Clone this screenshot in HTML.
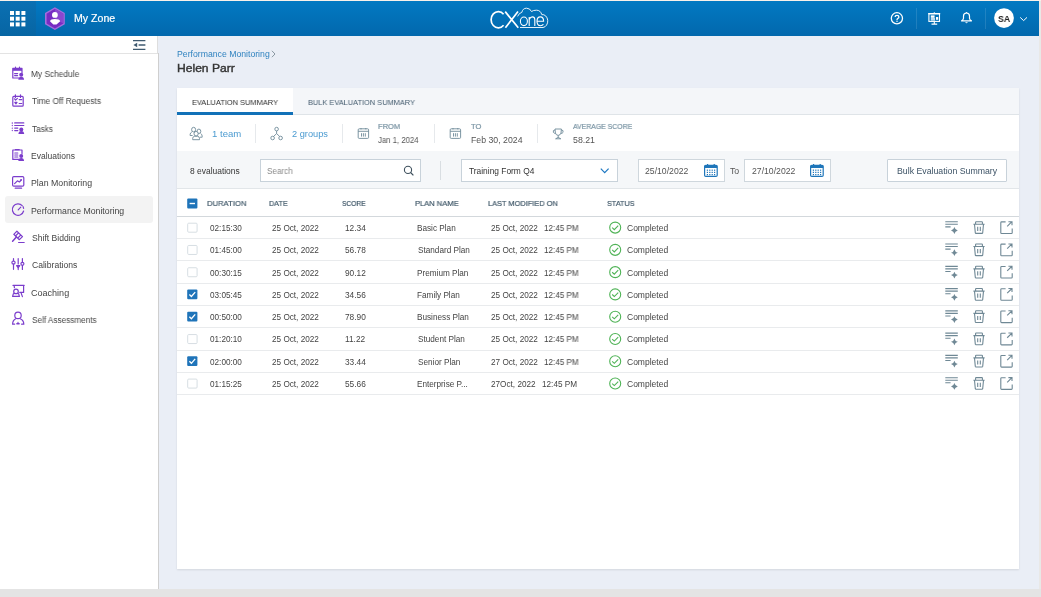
<!DOCTYPE html>
<html><head><meta charset="utf-8"><title>Performance Monitoring</title>
<style>
html,body{margin:0;padding:0;width:1041px;height:597px;overflow:hidden;background:#e4e4e4;}
body{position:relative;font-family:"Liberation Sans", sans-serif;}
.b{position:absolute;box-sizing:content-box;}
.t{position:absolute;white-space:nowrap;transform-origin:0 0;will-change:transform;}
svg.ic{position:absolute;left:0;top:0;}
</style></head><body>
<div class="b" style="left:0px;top:0px;width:1041px;height:1px;background:#f8f1ea"></div>
<div class="b" style="left:1039px;top:1px;width:2px;height:588px;background:#e9e8e6"></div>
<div class="b" style="left:0px;top:589px;width:1041px;height:8px;background:#e4e4e4"></div>
<div class="b" style="left:0px;top:1px;width:1039px;height:35px;background:linear-gradient(#0279c2,#0268ad)"></div>
<div class="b" style="left:0px;top:1px;width:36px;height:35px;background:linear-gradient(#0a70b3,#0765a3)"></div>
<div class="b" style="left:158px;top:36px;width:881px;height:553px;background:#eaeef6"></div>
<div class="b" style="left:0px;top:53px;width:158px;height:536px;background:#fff;border-right:1px solid #cfcfcf"></div>
<div class="b" style="left:0px;top:36px;width:157px;height:17px;background:#fff;border-right:1px solid #dedede;border-bottom:1px solid #e3e3e3"></div>
<div class="b" style="left:5px;top:196px;width:148px;height:27px;background:#f3f3f3;border-radius:3px"></div>
<div class="b" style="left:177px;top:88px;width:842px;height:481px;background:#fff;box-shadow:0 1px 2px rgba(0,0,0,0.10)"></div>
<div class="b" style="left:293px;top:88px;width:726px;height:26px;background:#f4f6f9"></div>
<div class="b" style="left:177px;top:114px;width:842px;height:1px;background:#dfe4e8"></div>
<div class="b" style="left:177px;top:112px;width:116px;height:3px;background:#1271b8"></div>
<div class="b" style="left:177px;top:151px;width:842px;height:37px;background:#f5f7f9"></div>
<div class="b" style="left:177px;top:188px;width:842px;height:1px;background:#e2e6e9"></div>
<div class="b" style="left:177px;top:216px;width:842px;height:1px;background:#d3d8dc"></div>
<div class="b" style="left:177px;top:238px;width:842px;height:1px;background:#e9ebed"></div>
<div class="b" style="left:177px;top:260px;width:842px;height:1px;background:#e9ebed"></div>
<div class="b" style="left:177px;top:283px;width:842px;height:1px;background:#e9ebed"></div>
<div class="b" style="left:177px;top:305px;width:842px;height:1px;background:#e9ebed"></div>
<div class="b" style="left:177px;top:327px;width:842px;height:1px;background:#e9ebed"></div>
<div class="b" style="left:177px;top:350px;width:842px;height:1px;background:#e9ebed"></div>
<div class="b" style="left:177px;top:372px;width:842px;height:1px;background:#e9ebed"></div>
<div class="b" style="left:177px;top:394px;width:842px;height:1px;background:#e9ebed"></div>
<div class="b" style="left:255px;top:124px;width:1px;height:19px;background:#e6e9ec"></div>
<div class="b" style="left:342px;top:124px;width:1px;height:19px;background:#e6e9ec"></div>
<div class="b" style="left:434px;top:124px;width:1px;height:19px;background:#e6e9ec"></div>
<div class="b" style="left:537px;top:124px;width:1px;height:19px;background:#e6e9ec"></div>
<div class="b" style="left:260px;top:159px;width:159px;height:21px;background:#fff;border:1px solid #c8d2da"></div>
<div class="b" style="left:440px;top:161px;width:1px;height:19px;background:#d9dee2"></div>
<div class="b" style="left:461px;top:159px;width:155px;height:21px;background:#fff;border:1px solid #c8d2da"></div>
<div class="b" style="left:638px;top:159px;width:85px;height:21px;background:#fff;border:1px solid #cfd7dd"></div>
<div class="b" style="left:744px;top:159px;width:85px;height:21px;background:#fff;border:1px solid #cfd7dd"></div>
<div class="b" style="left:887px;top:159px;width:118px;height:21px;background:#fff;border:1px solid #c8d2da;border-radius:1px"></div>
<div class="b" style="left:916px;top:8px;width:1px;height:21px;background:rgba(255,255,255,0.12)"></div>
<div class="b" style="left:985px;top:8px;width:1px;height:21px;background:rgba(255,255,255,0.12)"></div>
<svg class="ic" width="1041" height="597" viewBox="0 0 1041 597">
<path d="M271.9,50.8 L275,54 L271.9,57.2" fill="none" stroke="#7f8e99" stroke-width="0.9"/>
<rect x="10" y="11" width="4" height="4" fill="#fff"/>
<rect x="10" y="16.7" width="4" height="4" fill="#fff"/>
<rect x="10" y="22.4" width="4" height="4" fill="#fff"/>
<rect x="15.7" y="11" width="4" height="4" fill="#fff"/>
<rect x="15.7" y="16.7" width="4" height="4" fill="#fff"/>
<rect x="15.7" y="22.4" width="4" height="4" fill="#fff"/>
<rect x="21.4" y="11" width="4" height="4" fill="#fff"/>
<rect x="21.4" y="16.7" width="4" height="4" fill="#fff"/>
<rect x="21.4" y="22.4" width="4" height="4" fill="#fff"/>
<polygon points="54.9,7.2 64.8,12.9 64.8,24.3 54.9,29.9 45,24.3 45,12.9" fill="#a36ddd"/>
<polygon points="54.9,8.8 63.4,13.7 63.4,23.5 54.9,28.4 46.6,23.5 46.6,13.7" fill="#772cc2"/>
<polygon points="54.9,9.0 63.2,13.8 63.2,23.4 54.9,18.6" fill="#8d4ad0" opacity="0.9"/>
<circle cx="54.9" cy="14.9" r="2.9" fill="#fff"/>
<path d="M50,21.3 Q50.5,19 54.9,19 Q59.5,19 60.2,21.3 L56.5,24.4 L53.3,24.4 Z" fill="#fff"/>
<g fill="none" stroke="#fff">
<path d="M503.6,14.2 A7.2,8.1 0 1 0 503.6,25.2" stroke-width="1.7"/>
<path d="M505.2,11.6 L518.3,27.8 M518.0,11.6 L505.4,27.8" stroke-width="1.7"/>
<ellipse cx="523.9" cy="21.3" rx="3.5" ry="4.3" stroke-width="1.1"/>
<path d="M529.2,25.9 L529.2,17 M529.2,19.5 Q530.5,16.9 532.3,16.9 Q534.8,16.9 534.8,19.8 L534.8,25.9" stroke-width="1.1"/>
<path d="M537.1,21.3 L543.6,21.3 Q543.6,16.9 540.3,16.9 Q537,16.9 537,21.3 Q537,25.7 540.4,25.7 Q542.5,25.7 543.4,24.3" stroke-width="1.1"/>
<path d="M520,27.5 L543,27.5 A5.2,6.3 0 0 0 541.8,14.6 Q540.5,10.2 536.5,10.2 Q533.2,10.2 531.5,11.5 Q530,8.2 526.5,8.2 Q522.8,8.2 521.8,12.4 Q519,13 517.6,16.4" stroke-width="0.9"/>
</g>
<circle cx="896.9" cy="18.3" r="5.6" fill="none" stroke="#fff" stroke-width="1.3"/>
<path d="M895.1,17.0 Q895.1,15.3 897,15.3 Q898.9,15.3 898.9,16.9 Q898.9,17.9 897.8,18.5 Q897,19 897,19.9" fill="none" stroke="#fff" stroke-width="1.3"/>
<circle cx="897" cy="21.3" r="0.75" fill="#fff"/>
<g fill="none" stroke="#fff" stroke-width="1.1">
<rect x="928.9" y="13.8" width="10.6" height="7.6"/>
<path d="M928.2,13.6 L940.2,13.6 M934.3,12.2 L934.3,13.6 M934.3,21.5 L934.3,23.8 M931.5,24.1 L937.2,24.1 M930.8,18.8 L935,18.8 M930.8,20 L935,20"/>
</g>
<rect x="930.8" y="15.4" width="3.8" height="2.4" fill="#fff"/>
<rect x="936.0" y="17.0" width="2.2" height="2.8" fill="#fff"/>
<path d="M961.6,20.9 Q963.3,20 963.5,18.2 L963.5,16.1 Q963.5,13 966.5,13 Q969.5,13 969.5,16.1 L969.5,18.2 Q969.7,20 971.4,20.9 Z" fill="none" stroke="#fff" stroke-width="1.2" stroke-linejoin="round"/>
<circle cx="966.5" cy="12.6" r="0.7" fill="#fff"/>
<path d="M965.1,22.2 Q966.5,24.4 967.9,22.2 Z" fill="#fff"/>
<circle cx="1004" cy="18.1" r="9.9" fill="#fff"/>
<path d="M1020.2,17.4 L1023.6,20.6 L1027,17.4" fill="none" stroke="#fff" stroke-width="1"/>
<g stroke="#3f5a70" stroke-width="1.3">
<path d="M133,40.6 L145.4,40.6 M138.6,45 L145.4,45 M133,49.4 L145.4,49.4"/>
</g>
<polygon points="133.4,45 137.2,42.8 137.2,47.2" fill="#3f5a70"/>
<g fill="none" stroke="#7b3dcc" stroke-width="1.2" stroke-linecap="round" stroke-linejoin="round">
<path d="M19,78 L12.8,78 L12.8,68.4 L22,68.4 L22,73"/>
<rect x="12.8" y="68.4" width="9.2" height="2.4" fill="#7b3dcc" stroke="none"/>
<path d="M15.5,67.2 L15.5,69 M19.5,67.2 L19.5,69 M14.6,73.6 L17.6,73.6 M14.6,75.6 L17.6,75.6"/>
<rect x="12.8" y="96.4" width="10.4" height="9.8" rx="1"/>
<path d="M15.4,94.8 L15.4,97.4 M20.5,94.8 L20.5,97.4 M14.6,98.8 L15.6,100 L17.4,98.4 M19.2,99.6 L21.8,99.6 M14.8,102.4 L17,102.4 L15.9,103.8 Z M19.2,103.5 L21.8,103.5"/>
<path d="M12.3,122.8 L12.3,123.2 M12.3,125.4 L12.3,125.6 M12.3,128 L12.3,128.2 M12.3,130.4 L12.3,130.6 M14.7,122.9 L23.8,122.9 M14.7,125.5 L23.8,125.5 M14.7,128.1 L17.8,128.1 M14.7,130.6 L17.8,130.6"/>
<path d="M19,159.4 L12.8,159.4 L12.8,150 L22,150 L22,153.6"/>
<path d="M15.4,149.6 L19.2,149.6 M14.8,153 L17.8,153 M14.8,155 L17.8,155 M14.8,157 L17.8,157"/>
<rect x="12.6" y="176.6" width="11.2" height="9.6" rx="1.2"/>
<path d="M15.2,188.2 L21.6,188.2 M14.6,183.6 L17.4,180.8 L19.4,182 L21.2,180"/>
<path d="M23.6,211 A5.7,5.7 0 1 1 22.2,205.6"/>
<path d="M23.1,206.6 L23.6,208.4"/>
<path d="M18.2,209.8 L20.8,207.2"/>
<path d="M13.8,234.3 L16.9,231.2 L22.5,236.6 L19.4,239.7 Z M18.6,232.9 L15.5,236 M20.8,235 L17.7,238.1 M18.6,242.5 L24.2,242.5"/>
<path d="M16.4,237.0 L12.6,241.2" stroke-width="1.5"/>
<path d="M13.5,258.5 L13.5,261 M13.5,264.2 L13.5,269.3 M18.2,258.6 L18.2,264 M18.2,267.6 L18.2,269.6 M22.4,258.5 L22.4,262.3 M22.4,265.3 L22.4,269.5"/>
<circle cx="13.5" cy="262.6" r="1.6"/><circle cx="22.4" cy="263.8" r="1.5"/>
<path d="M16.6,265.6 L19.8,265.6 L18.2,267.6 Z"/>
<path d="M13,285.4 L24.2,285.4 L23.6,285.6 L23.6,292.4 L19.8,292.4 M14.1,285.4 L14.4,287.6 M21,292.6 L22.4,296.6"/>
<circle cx="16" cy="291.4" r="2.3"/>
<path d="M13.4,293.6 L12.6,296.4 L19.4,296.4 L18.6,293.6"/>
<circle cx="18" cy="315.4" r="3.2"/>
<path d="M15.8,318.8 Q12.6,320.4 12.6,324.2 L14.6,324.2 M20.2,318.8 Q23.8,320.4 23.8,324.2 L21.6,324.2"/>
</g>
<path d="M18,321.6 L18.8,322.9 L20.3,322.9 L19.1,323.9 L19.6,325 L18,324.3 L16.4,325 L16.9,323.9 L15.7,322.9 L17.2,322.9 Z" fill="#7b3dcc"/>
<circle cx="21.2" cy="74.7" r="2.0" fill="#7b3dcc"/>
<path d="M18.3,79.80000000000001 Q18.5,76.80000000000001 21.2,76.80000000000001 Q23.9,76.80000000000001 24.099999999999998,79.80000000000001 Z" fill="#7b3dcc"/>
<circle cx="21.3" cy="129.5" r="2.0" fill="#7b3dcc"/>
<path d="M18.400000000000002,134.0 Q18.6,131.0 21.3,131.0 Q24.0,131.0 24.2,134.0 Z" fill="#7b3dcc"/>
<circle cx="21.2" cy="156.1" r="2.0" fill="#7b3dcc"/>
<path d="M18.3,161.0 Q18.5,158.0 21.2,158.0 Q23.9,158.0 24.099999999999998,161.0 Z" fill="#7b3dcc"/>
<circle cx="21.1" cy="179.8" r="0.9" fill="#7b3dcc"/>
<g fill="none" stroke="#6e8a99" stroke-width="0.9">
<ellipse cx="193.6" cy="129.6" rx="2.0" ry="2.3"/>
<path d="M191.9,131.9 Q190.1,132.7 190.1,134.7 L190.1,135.5 L192.6,135.5"/>
<ellipse cx="198.9" cy="131.3" rx="1.9" ry="2.2"/>
<path d="M200.6,133.5 Q202.2,134.3 202.2,136.3 L202.2,137.2 L199.9,137.2"/>
<ellipse cx="196.1" cy="133.7" rx="2.1" ry="2.3" fill="#fff"/>
<path d="M192.7,139.7 L192.7,138.3 Q192.7,136.5 194.7,136.3 L197.5,136.3 Q199.5,136.5 199.5,138.3 L199.5,139.7 Z" fill="#fff"/>
<circle cx="276.6" cy="129.1" r="1.8"/><circle cx="272.6" cy="138" r="1.8"/><circle cx="280.6" cy="138" r="1.8"/>
<path d="M276.6,130.9 L276.6,133.6 L273.6,136.4 M276.6,133.6 L279.6,136.4"/>
<rect x="358.2" y="128.8" width="10.4" height="9.6" rx="1"/>
<path d="M358.2,131.3 L368.59999999999997,131.3 M361.0,128 L361.0,129.4 M365.8,128 L365.8,129.4 M361.5,133.2 L361.5,136.6 M363.4,133.2 L363.4,136.6 M365.3,133.2 L365.3,136.6"/>
<rect x="450.2" y="128.8" width="10.4" height="9.6" rx="1"/>
<path d="M450.2,131.3 L460.59999999999997,131.3 M453.0,128 L453.0,129.4 M457.8,128 L457.8,129.4 M453.5,133.2 L453.5,136.6 M455.4,133.2 L455.4,136.6 M457.3,133.2 L457.3,136.6"/>
<path d="M555,129 L561.4,129 L561,133 Q560.5,135.2 558.2,135.4 Q555.9,135.2 555.4,133 Z M555,130 Q552.6,130 553.4,132.4 Q554,133.4 555.4,133.4 M561.4,130 Q563.8,130 563,132.4 Q562.4,133.4 561,133.4 M558.2,135.4 L558.2,137.6 M555.6,138.8 L560.8,138.8 L558.2,137.4 Z"/>
</g>
<circle cx="408" cy="169.9" r="3.6" fill="none" stroke="#3d4f5c" stroke-width="1.1"/>
<path d="M410.6,172.5 L413.4,175.3" stroke="#3d4f5c" stroke-width="1.2"/>
<path d="M600.8,168.6 L604.7,172.6 L608.6,168.6" fill="none" stroke="#1e78c2" stroke-width="1.2"/>
<rect x="704.6" y="165.4" width="12.6" height="11" rx="1.2" fill="none" stroke="#1f76ba" stroke-width="1.2"/>
<rect x="704.6" y="165.4" width="12.6" height="2.6" fill="#1f76ba"/>
<path d="M707.6,164 L707.6,166 M714.2,164 L714.2,166" stroke="#1f76ba" stroke-width="1.2"/>
<rect x="706.8000000000001" y="169.6" width="1.2" height="1.2" fill="#1f76ba"/>
<rect x="709.2" y="169.6" width="1.2" height="1.2" fill="#1f76ba"/>
<rect x="711.6" y="169.6" width="1.2" height="1.2" fill="#1f76ba"/>
<rect x="714.0" y="169.6" width="1.2" height="1.2" fill="#1f76ba"/>
<rect x="706.8000000000001" y="171.8" width="1.2" height="1.2" fill="#1f76ba"/>
<rect x="709.2" y="171.8" width="1.2" height="1.2" fill="#1f76ba"/>
<rect x="711.6" y="171.8" width="1.2" height="1.2" fill="#1f76ba"/>
<rect x="714.0" y="171.8" width="1.2" height="1.2" fill="#1f76ba"/>
<rect x="706.8000000000001" y="174.0" width="1.2" height="1.2" fill="#1f76ba"/>
<rect x="709.2" y="174.0" width="1.2" height="1.2" fill="#1f76ba"/>
<rect x="711.6" y="174.0" width="1.2" height="1.2" fill="#1f76ba"/>
<rect x="714.0" y="174.0" width="1.2" height="1.2" fill="#1f76ba"/>
<rect x="810.6" y="165.4" width="12.6" height="11" rx="1.2" fill="none" stroke="#1f76ba" stroke-width="1.2"/>
<rect x="810.6" y="165.4" width="12.6" height="2.6" fill="#1f76ba"/>
<path d="M813.6,164 L813.6,166 M820.2,164 L820.2,166" stroke="#1f76ba" stroke-width="1.2"/>
<rect x="812.8000000000001" y="169.6" width="1.2" height="1.2" fill="#1f76ba"/>
<rect x="815.2" y="169.6" width="1.2" height="1.2" fill="#1f76ba"/>
<rect x="817.6" y="169.6" width="1.2" height="1.2" fill="#1f76ba"/>
<rect x="820.0" y="169.6" width="1.2" height="1.2" fill="#1f76ba"/>
<rect x="812.8000000000001" y="171.8" width="1.2" height="1.2" fill="#1f76ba"/>
<rect x="815.2" y="171.8" width="1.2" height="1.2" fill="#1f76ba"/>
<rect x="817.6" y="171.8" width="1.2" height="1.2" fill="#1f76ba"/>
<rect x="820.0" y="171.8" width="1.2" height="1.2" fill="#1f76ba"/>
<rect x="812.8000000000001" y="174.0" width="1.2" height="1.2" fill="#1f76ba"/>
<rect x="815.2" y="174.0" width="1.2" height="1.2" fill="#1f76ba"/>
<rect x="817.6" y="174.0" width="1.2" height="1.2" fill="#1f76ba"/>
<rect x="820.0" y="174.0" width="1.2" height="1.2" fill="#1f76ba"/>
<rect x="187.2" y="198.6" width="10.2" height="9.8" rx="1" fill="#1f74b9"/>
<path d="M189.6,203.5 L195,203.5" stroke="#fff" stroke-width="1.4"/>
<rect x="187.7" y="223.2" width="9.4" height="9" rx="1" fill="#fff" stroke="#d3dae0" stroke-width="0.9"/>
<circle cx="615.2" cy="227.6" r="5.5" fill="none" stroke="#4fb356" stroke-width="1.1"/>
<path d="M612.2,227.7 L614.3,229.7 L618.2,225.7" fill="none" stroke="#4fb356" stroke-width="1.1"/>
<path d="M945.3,221.79999999999998 L957.8,221.79999999999998 M945.3,224.29999999999998 L957.8,224.29999999999998 M945.3,226.9 L950.6,226.9" stroke="#6f8895" stroke-width="1.1"/>
<path d="M954.4,227.1 Q955.0,229.9 957.8,230.5 Q955.0,231.1 954.4,233.9 Q953.8,231.1 951.0,230.5 Q953.8,229.9 954.4,227.1 Z" fill="#6f8895"/>
<path d="M973.4,224.29999999999998 L984.6,224.29999999999998 M975.6,224.29999999999998 L975.6,222.2 Q975.6,221.7 976.2,221.7 L981.8,221.7 Q982.4,221.7 982.4,222.2 L982.4,224.29999999999998 M974.5,224.29999999999998 L975.3,232.79999999999998 Q975.4,233.4 976,233.4 L982,233.4 Q982.6,233.4 982.7,232.79999999999998 L983.5,224.29999999999998 M977.7,226.79999999999998 L977.7,231.0 M980.3,226.79999999999998 L980.3,231.0" fill="none" stroke="#6f8895" stroke-width="1.1"/>
<path d="M1005.6,221.9 L1001.6,221.9 Q1000.8,221.9 1000.8,222.7 L1000.8,232.7 Q1000.8,233.5 1001.6,233.5 L1011.4,233.5 Q1012.2,233.5 1012.2,232.7 L1012.2,228.6 M1007.2,226.4 L1011.9,221.7 M1008.4,221.7 L1012,221.7 L1012,225.2" fill="none" stroke="#6f8895" stroke-width="1.1"/>
<rect x="187.7" y="245.47" width="9.4" height="9" rx="1" fill="#fff" stroke="#d3dae0" stroke-width="0.9"/>
<circle cx="615.2" cy="249.87" r="5.5" fill="none" stroke="#4fb356" stroke-width="1.1"/>
<path d="M612.2,249.97 L614.3,251.97 L618.2,247.97" fill="none" stroke="#4fb356" stroke-width="1.1"/>
<path d="M945.3,244.07 L957.8,244.07 M945.3,246.57 L957.8,246.57 M945.3,249.17000000000002 L950.6,249.17000000000002" stroke="#6f8895" stroke-width="1.1"/>
<path d="M954.4,249.37 Q955.0,252.17000000000002 957.8,252.77 Q955.0,253.37 954.4,256.17 Q953.8,253.37 951.0,252.77 Q953.8,252.17000000000002 954.4,249.37 Z" fill="#6f8895"/>
<path d="M973.4,246.57 L984.6,246.57 M975.6,246.57 L975.6,244.47 Q975.6,243.97 976.2,243.97 L981.8,243.97 Q982.4,243.97 982.4,244.47 L982.4,246.57 M974.5,246.57 L975.3,255.07 Q975.4,255.67000000000002 976,255.67000000000002 L982,255.67000000000002 Q982.6,255.67000000000002 982.7,255.07 L983.5,246.57 M977.7,249.07 L977.7,253.27 M980.3,249.07 L980.3,253.27" fill="none" stroke="#6f8895" stroke-width="1.1"/>
<path d="M1005.6,244.17000000000002 L1001.6,244.17000000000002 Q1000.8,244.17000000000002 1000.8,244.97 L1000.8,254.97 Q1000.8,255.77 1001.6,255.77 L1011.4,255.77 Q1012.2,255.77 1012.2,254.97 L1012.2,250.87 M1007.2,248.67000000000002 L1011.9,243.97 M1008.4,243.97 L1012,243.97 L1012,247.47" fill="none" stroke="#6f8895" stroke-width="1.1"/>
<rect x="187.7" y="267.74" width="9.4" height="9" rx="1" fill="#fff" stroke="#d3dae0" stroke-width="0.9"/>
<circle cx="615.2" cy="272.14" r="5.5" fill="none" stroke="#4fb356" stroke-width="1.1"/>
<path d="M612.2,272.24 L614.3,274.24 L618.2,270.24" fill="none" stroke="#4fb356" stroke-width="1.1"/>
<path d="M945.3,266.34 L957.8,266.34 M945.3,268.84 L957.8,268.84 M945.3,271.44 L950.6,271.44" stroke="#6f8895" stroke-width="1.1"/>
<path d="M954.4,271.64 Q955.0,274.43999999999994 957.8,275.03999999999996 Q955.0,275.64 954.4,278.43999999999994 Q953.8,275.64 951.0,275.03999999999996 Q953.8,274.43999999999994 954.4,271.64 Z" fill="#6f8895"/>
<path d="M973.4,268.84 L984.6,268.84 M975.6,268.84 L975.6,266.74 Q975.6,266.24 976.2,266.24 L981.8,266.24 Q982.4,266.24 982.4,266.74 L982.4,268.84 M974.5,268.84 L975.3,277.34 Q975.4,277.94 976,277.94 L982,277.94 Q982.6,277.94 982.7,277.34 L983.5,268.84 M977.7,271.34 L977.7,275.53999999999996 M980.3,271.34 L980.3,275.53999999999996" fill="none" stroke="#6f8895" stroke-width="1.1"/>
<path d="M1005.6,266.44 L1001.6,266.44 Q1000.8,266.44 1000.8,267.24 L1000.8,277.24 Q1000.8,278.03999999999996 1001.6,278.03999999999996 L1011.4,278.03999999999996 Q1012.2,278.03999999999996 1012.2,277.24 L1012.2,273.14 M1007.2,270.94 L1011.9,266.24 M1008.4,266.24 L1012,266.24 L1012,269.74" fill="none" stroke="#6f8895" stroke-width="1.1"/>
<rect x="187.2" y="289.51" width="10.2" height="9.8" rx="1" fill="#1f74b9"/>
<path d="M189.4,294.51 L191.4,296.51 L195.2,292.10999999999996" fill="none" stroke="#fff" stroke-width="1.3"/>
<circle cx="615.2" cy="294.40999999999997" r="5.5" fill="none" stroke="#4fb356" stroke-width="1.1"/>
<path d="M612.2,294.51 L614.3,296.51 L618.2,292.51" fill="none" stroke="#4fb356" stroke-width="1.1"/>
<path d="M945.3,288.60999999999996 L957.8,288.60999999999996 M945.3,291.10999999999996 L957.8,291.10999999999996 M945.3,293.71 L950.6,293.71" stroke="#6f8895" stroke-width="1.1"/>
<path d="M954.4,293.90999999999997 Q955.0,296.7099999999999 957.8,297.30999999999995 Q955.0,297.90999999999997 954.4,300.7099999999999 Q953.8,297.90999999999997 951.0,297.30999999999995 Q953.8,296.7099999999999 954.4,293.90999999999997 Z" fill="#6f8895"/>
<path d="M973.4,291.10999999999996 L984.6,291.10999999999996 M975.6,291.10999999999996 L975.6,289.01 Q975.6,288.51 976.2,288.51 L981.8,288.51 Q982.4,288.51 982.4,289.01 L982.4,291.10999999999996 M974.5,291.10999999999996 L975.3,299.60999999999996 Q975.4,300.21 976,300.21 L982,300.21 Q982.6,300.21 982.7,299.60999999999996 L983.5,291.10999999999996 M977.7,293.60999999999996 L977.7,297.80999999999995 M980.3,293.60999999999996 L980.3,297.80999999999995" fill="none" stroke="#6f8895" stroke-width="1.1"/>
<path d="M1005.6,288.71 L1001.6,288.71 Q1000.8,288.71 1000.8,289.51 L1000.8,299.51 Q1000.8,300.30999999999995 1001.6,300.30999999999995 L1011.4,300.30999999999995 Q1012.2,300.30999999999995 1012.2,299.51 L1012.2,295.40999999999997 M1007.2,293.21 L1011.9,288.51 M1008.4,288.51 L1012,288.51 L1012,292.01" fill="none" stroke="#6f8895" stroke-width="1.1"/>
<rect x="187.2" y="311.78000000000003" width="10.2" height="9.8" rx="1" fill="#1f74b9"/>
<path d="M189.4,316.78000000000003 L191.4,318.78000000000003 L195.2,314.38" fill="none" stroke="#fff" stroke-width="1.3"/>
<circle cx="615.2" cy="316.68" r="5.5" fill="none" stroke="#4fb356" stroke-width="1.1"/>
<path d="M612.2,316.78000000000003 L614.3,318.78000000000003 L618.2,314.78000000000003" fill="none" stroke="#4fb356" stroke-width="1.1"/>
<path d="M945.3,310.88 L957.8,310.88 M945.3,313.38 L957.8,313.38 M945.3,315.98 L950.6,315.98" stroke="#6f8895" stroke-width="1.1"/>
<path d="M954.4,316.18 Q955.0,318.97999999999996 957.8,319.58 Q955.0,320.18 954.4,322.97999999999996 Q953.8,320.18 951.0,319.58 Q953.8,318.97999999999996 954.4,316.18 Z" fill="#6f8895"/>
<path d="M973.4,313.38 L984.6,313.38 M975.6,313.38 L975.6,311.28000000000003 Q975.6,310.78000000000003 976.2,310.78000000000003 L981.8,310.78000000000003 Q982.4,310.78000000000003 982.4,311.28000000000003 L982.4,313.38 M974.5,313.38 L975.3,321.88 Q975.4,322.48 976,322.48 L982,322.48 Q982.6,322.48 982.7,321.88 L983.5,313.38 M977.7,315.88 L977.7,320.08 M980.3,315.88 L980.3,320.08" fill="none" stroke="#6f8895" stroke-width="1.1"/>
<path d="M1005.6,310.98 L1001.6,310.98 Q1000.8,310.98 1000.8,311.78000000000003 L1000.8,321.78000000000003 Q1000.8,322.58 1001.6,322.58 L1011.4,322.58 Q1012.2,322.58 1012.2,321.78000000000003 L1012.2,317.68 M1007.2,315.48 L1011.9,310.78000000000003 M1008.4,310.78000000000003 L1012,310.78000000000003 L1012,314.28000000000003" fill="none" stroke="#6f8895" stroke-width="1.1"/>
<rect x="187.7" y="334.55" width="9.4" height="9" rx="1" fill="#fff" stroke="#d3dae0" stroke-width="0.9"/>
<circle cx="615.2" cy="338.95" r="5.5" fill="none" stroke="#4fb356" stroke-width="1.1"/>
<path d="M612.2,339.05 L614.3,341.05 L618.2,337.05" fill="none" stroke="#4fb356" stroke-width="1.1"/>
<path d="M945.3,333.15 L957.8,333.15 M945.3,335.65 L957.8,335.65 M945.3,338.25 L950.6,338.25" stroke="#6f8895" stroke-width="1.1"/>
<path d="M954.4,338.45 Q955.0,341.24999999999994 957.8,341.84999999999997 Q955.0,342.45 954.4,345.24999999999994 Q953.8,342.45 951.0,341.84999999999997 Q953.8,341.24999999999994 954.4,338.45 Z" fill="#6f8895"/>
<path d="M973.4,335.65 L984.6,335.65 M975.6,335.65 L975.6,333.55 Q975.6,333.05 976.2,333.05 L981.8,333.05 Q982.4,333.05 982.4,333.55 L982.4,335.65 M974.5,335.65 L975.3,344.15 Q975.4,344.75 976,344.75 L982,344.75 Q982.6,344.75 982.7,344.15 L983.5,335.65 M977.7,338.15 L977.7,342.34999999999997 M980.3,338.15 L980.3,342.34999999999997" fill="none" stroke="#6f8895" stroke-width="1.1"/>
<path d="M1005.6,333.25 L1001.6,333.25 Q1000.8,333.25 1000.8,334.05 L1000.8,344.05 Q1000.8,344.84999999999997 1001.6,344.84999999999997 L1011.4,344.84999999999997 Q1012.2,344.84999999999997 1012.2,344.05 L1012.2,339.95 M1007.2,337.75 L1011.9,333.05 M1008.4,333.05 L1012,333.05 L1012,336.55" fill="none" stroke="#6f8895" stroke-width="1.1"/>
<rect x="187.2" y="356.32000000000005" width="10.2" height="9.8" rx="1" fill="#1f74b9"/>
<path d="M189.4,361.32000000000005 L191.4,363.32000000000005 L195.2,358.92" fill="none" stroke="#fff" stroke-width="1.3"/>
<circle cx="615.2" cy="361.22" r="5.5" fill="none" stroke="#4fb356" stroke-width="1.1"/>
<path d="M612.2,361.32000000000005 L614.3,363.32000000000005 L618.2,359.32000000000005" fill="none" stroke="#4fb356" stroke-width="1.1"/>
<path d="M945.3,355.42 L957.8,355.42 M945.3,357.92 L957.8,357.92 M945.3,360.52000000000004 L950.6,360.52000000000004" stroke="#6f8895" stroke-width="1.1"/>
<path d="M954.4,360.72 Q955.0,363.52 957.8,364.12 Q955.0,364.72 954.4,367.52 Q953.8,364.72 951.0,364.12 Q953.8,363.52 954.4,360.72 Z" fill="#6f8895"/>
<path d="M973.4,357.92 L984.6,357.92 M975.6,357.92 L975.6,355.82000000000005 Q975.6,355.32000000000005 976.2,355.32000000000005 L981.8,355.32000000000005 Q982.4,355.32000000000005 982.4,355.82000000000005 L982.4,357.92 M974.5,357.92 L975.3,366.42 Q975.4,367.02000000000004 976,367.02000000000004 L982,367.02000000000004 Q982.6,367.02000000000004 982.7,366.42 L983.5,357.92 M977.7,360.42 L977.7,364.62 M980.3,360.42 L980.3,364.62" fill="none" stroke="#6f8895" stroke-width="1.1"/>
<path d="M1005.6,355.52000000000004 L1001.6,355.52000000000004 Q1000.8,355.52000000000004 1000.8,356.32000000000005 L1000.8,366.32000000000005 Q1000.8,367.12 1001.6,367.12 L1011.4,367.12 Q1012.2,367.12 1012.2,366.32000000000005 L1012.2,362.22 M1007.2,360.02000000000004 L1011.9,355.32000000000005 M1008.4,355.32000000000005 L1012,355.32000000000005 L1012,358.82000000000005" fill="none" stroke="#6f8895" stroke-width="1.1"/>
<rect x="187.7" y="379.09000000000003" width="9.4" height="9" rx="1" fill="#fff" stroke="#d3dae0" stroke-width="0.9"/>
<circle cx="615.2" cy="383.49" r="5.5" fill="none" stroke="#4fb356" stroke-width="1.1"/>
<path d="M612.2,383.59000000000003 L614.3,385.59000000000003 L618.2,381.59000000000003" fill="none" stroke="#4fb356" stroke-width="1.1"/>
<path d="M945.3,377.69 L957.8,377.69 M945.3,380.19 L957.8,380.19 M945.3,382.79 L950.6,382.79" stroke="#6f8895" stroke-width="1.1"/>
<path d="M954.4,382.99 Q955.0,385.78999999999996 957.8,386.39 Q955.0,386.99 954.4,389.78999999999996 Q953.8,386.99 951.0,386.39 Q953.8,385.78999999999996 954.4,382.99 Z" fill="#6f8895"/>
<path d="M973.4,380.19 L984.6,380.19 M975.6,380.19 L975.6,378.09000000000003 Q975.6,377.59000000000003 976.2,377.59000000000003 L981.8,377.59000000000003 Q982.4,377.59000000000003 982.4,378.09000000000003 L982.4,380.19 M974.5,380.19 L975.3,388.69 Q975.4,389.29 976,389.29 L982,389.29 Q982.6,389.29 982.7,388.69 L983.5,380.19 M977.7,382.69 L977.7,386.89 M980.3,382.69 L980.3,386.89" fill="none" stroke="#6f8895" stroke-width="1.1"/>
<path d="M1005.6,377.79 L1001.6,377.79 Q1000.8,377.79 1000.8,378.59000000000003 L1000.8,388.59000000000003 Q1000.8,389.39 1001.6,389.39 L1011.4,389.39 Q1012.2,389.39 1012.2,388.59000000000003 L1012.2,384.49 M1007.2,382.29 L1011.9,377.59000000000003 M1008.4,377.59000000000003 L1012,377.59000000000003 L1012,381.09000000000003" fill="none" stroke="#6f8895" stroke-width="1.1"/>
</svg>
<span class="t" style="left:74.00px;top:14.00px;font-size:10.4px;line-height:10.4px;color:#fff;-webkit-text-stroke:0.2px #fff;transform:scaleX(1.0191);">My Zone</span>
<span class="t" style="left:998.00px;top:14.00px;font-size:9.6px;line-height:9.6px;color:#1e1e1e;font-weight:700;transform:scaleX(0.9048);">SA</span>
<span class="t" style="left:177.00px;top:50.00px;font-size:8.7px;line-height:8.7px;color:#2f82bf;">Performance Monitoring</span>
<span class="t" style="left:177.00px;top:63.00px;font-size:10.8px;line-height:10.8px;color:#353535;-webkit-text-stroke:0.4px #353535;transform:scaleX(1.1202);">Helen Parr</span>
<span class="t" style="left:31.00px;top:70.00px;font-size:8.5px;line-height:8.5px;color:#444;transform:scaleX(0.9824);">My Schedule</span>
<span class="t" style="left:31.50px;top:97.00px;font-size:8.5px;line-height:8.5px;color:#444;transform:scaleX(0.9791);">Time Off Requests</span>
<span class="t" style="left:31.50px;top:125.00px;font-size:8.5px;line-height:8.5px;color:#444;transform:scaleX(0.9623);">Tasks</span>
<span class="t" style="left:31.00px;top:152.00px;font-size:8.5px;line-height:8.5px;color:#444;">Evaluations</span>
<span class="t" style="left:31.00px;top:179.00px;font-size:8.5px;line-height:8.5px;color:#444;transform:scaleX(1.0345);">Plan Monitoring</span>
<span class="t" style="left:31.00px;top:207.00px;font-size:8.5px;line-height:8.5px;color:#444;transform:scaleX(1.0274);">Performance Monitoring</span>
<span class="t" style="left:31.50px;top:234.00px;font-size:8.5px;line-height:8.5px;color:#444;transform:scaleX(1.0105);">Shift Bidding</span>
<span class="t" style="left:31.50px;top:261.00px;font-size:8.5px;line-height:8.5px;color:#444;transform:scaleX(1.0090);">Calibrations</span>
<span class="t" style="left:31.00px;top:289.00px;font-size:8.5px;line-height:8.5px;color:#444;transform:scaleX(1.0625);">Coaching</span>
<span class="t" style="left:31.50px;top:316.00px;font-size:8.5px;line-height:8.5px;color:#444;transform:scaleX(0.9633);">Self Assessments</span>
<span class="t" style="left:192.00px;top:99.00px;font-size:8.0px;line-height:8.0px;color:#2e2e2e;transform:scaleX(0.9293);">EVALUATION SUMMARY</span>
<span class="t" style="left:308.00px;top:99.00px;font-size:8.0px;line-height:8.0px;color:#425a6d;transform:scaleX(0.9255);">BULK EVALUATION SUMMARY</span>
<span class="t" style="left:212.00px;top:130.00px;font-size:9.2px;line-height:9.2px;color:#4a9ad0;transform:scaleX(1.0408);">1 team</span>
<span class="t" style="left:291.50px;top:130.00px;font-size:9.0px;line-height:9.0px;color:#4a9ad0;transform:scaleX(1.0276);">2 groups</span>
<span class="t" style="left:378.00px;top:123.00px;font-size:7.6px;line-height:7.6px;color:#7c96a5;-webkit-text-stroke:0.22px #7c96a5;transform:scaleX(0.9901);">FROM</span>
<span class="t" style="left:378.00px;top:136.00px;font-size:8.4px;line-height:8.4px;color:#555;transform:scaleX(0.9266);">Jan 1, 2024</span>
<span class="t" style="left:471.00px;top:123.00px;font-size:7.6px;line-height:7.6px;color:#7c96a5;-webkit-text-stroke:0.22px #7c96a5;">TO</span>
<span class="t" style="left:470.50px;top:136.00px;font-size:8.4px;line-height:8.4px;color:#555;transform:scaleX(1.0439);">Feb 30, 2024</span>
<span class="t" style="left:573.00px;top:123.00px;font-size:7.6px;line-height:7.6px;color:#7c96a5;-webkit-text-stroke:0.22px #7c96a5;transform:scaleX(0.9072);">AVERAGE SCORE</span>
<span class="t" style="left:572.50px;top:136.00px;font-size:8.4px;line-height:8.4px;color:#555;transform:scaleX(1.0470);">58.21</span>
<span class="t" style="left:189.50px;top:167.00px;font-size:8.4px;line-height:8.4px;color:#333;transform:scaleX(1.0069);">8 evaluations</span>
<span class="t" style="left:267.00px;top:167.00px;font-size:8.3px;line-height:8.3px;color:#8a8a8a;transform:scaleX(0.9765);">Search</span>
<span class="t" style="left:468.50px;top:167.00px;font-size:8.4px;line-height:8.4px;color:#333;">Training Form Q4</span>
<span class="t" style="left:645.00px;top:167.00px;font-size:8.5px;line-height:8.5px;color:#555;transform:scaleX(1.0186);">25/10/2022</span>
<span class="t" style="left:730.00px;top:167.00px;font-size:8.6px;line-height:8.6px;color:#555;transform:scaleX(1.0174);">To</span>
<span class="t" style="left:751.50px;top:167.00px;font-size:8.5px;line-height:8.5px;color:#555;transform:scaleX(1.0186);">27/10/2022</span>
<span class="t" style="left:896.50px;top:167.00px;font-size:8.7px;line-height:8.7px;color:#3d5366;transform:scaleX(1.0070);">Bulk Evaluation Summary</span>
<span class="t" style="left:207.00px;top:200.00px;font-size:8.0px;line-height:8.0px;color:#3f5768;-webkit-text-stroke:0.2px #3f5768;transform:scaleX(0.9571);">DURATION</span>
<span class="t" style="left:269.00px;top:200.00px;font-size:8.0px;line-height:8.0px;color:#3f5768;-webkit-text-stroke:0.2px #3f5768;transform:scaleX(0.8987);">DATE</span>
<span class="t" style="left:342.00px;top:200.00px;font-size:8.0px;line-height:8.0px;color:#3f5768;-webkit-text-stroke:0.2px #3f5768;transform:scaleX(0.8353);">SCORE</span>
<span class="t" style="left:415.00px;top:200.00px;font-size:8.0px;line-height:8.0px;color:#3f5768;-webkit-text-stroke:0.2px #3f5768;transform:scaleX(0.9437);">PLAN NAME</span>
<span class="t" style="left:488.00px;top:200.00px;font-size:8.0px;line-height:8.0px;color:#3f5768;-webkit-text-stroke:0.2px #3f5768;transform:scaleX(0.9247);">LAST MODIFIED ON</span>
<span class="t" style="left:606.50px;top:200.00px;font-size:8.0px;line-height:8.0px;color:#3f5768;-webkit-text-stroke:0.2px #3f5768;transform:scaleX(0.9074);">STATUS</span>
<span class="t" style="left:210.00px;top:225.00px;font-size:8.2px;line-height:8.2px;color:#444;">02:15:30</span>
<span class="t" style="left:271.50px;top:225.00px;font-size:8.2px;line-height:8.2px;color:#444;">25 Oct, 2022</span>
<span class="t" style="left:344.50px;top:224.00px;font-size:8.3px;line-height:8.3px;color:#444;">12.34</span>
<span class="t" style="left:417.00px;top:225.00px;font-size:8.2px;line-height:8.2px;color:#444;">Basic Plan</span>
<span class="t" style="left:490.50px;top:225.00px;font-size:8.2px;line-height:8.2px;color:#444;">25 Oct, 2022</span>
<span class="t" style="left:544.00px;top:225.00px;font-size:8.2px;line-height:8.2px;color:#444;transform:scaleX(0.9845);">12:45 PM</span>
<span class="t" style="left:626.50px;top:224.00px;font-size:8.5px;line-height:8.5px;color:#444;">Completed</span>
<span class="t" style="left:210.00px;top:247.00px;font-size:8.2px;line-height:8.2px;color:#444;">01:45:00</span>
<span class="t" style="left:271.50px;top:247.00px;font-size:8.2px;line-height:8.2px;color:#444;">25 Oct, 2022</span>
<span class="t" style="left:344.50px;top:246.00px;font-size:8.3px;line-height:8.3px;color:#444;">56.78</span>
<span class="t" style="left:417.50px;top:247.00px;font-size:8.2px;line-height:8.2px;color:#444;">Standard Plan</span>
<span class="t" style="left:490.50px;top:247.00px;font-size:8.2px;line-height:8.2px;color:#444;">25 Oct, 2022</span>
<span class="t" style="left:544.00px;top:247.00px;font-size:8.2px;line-height:8.2px;color:#444;transform:scaleX(0.9845);">12:45 PM</span>
<span class="t" style="left:626.50px;top:246.00px;font-size:8.5px;line-height:8.5px;color:#444;">Completed</span>
<span class="t" style="left:210.00px;top:270.00px;font-size:8.2px;line-height:8.2px;color:#444;">00:30:15</span>
<span class="t" style="left:271.50px;top:270.00px;font-size:8.2px;line-height:8.2px;color:#444;">25 Oct, 2022</span>
<span class="t" style="left:344.50px;top:269.00px;font-size:8.3px;line-height:8.3px;color:#444;">90.12</span>
<span class="t" style="left:417.00px;top:270.00px;font-size:8.2px;line-height:8.2px;color:#444;">Premium Plan</span>
<span class="t" style="left:490.50px;top:270.00px;font-size:8.2px;line-height:8.2px;color:#444;">25 Oct, 2022</span>
<span class="t" style="left:544.00px;top:270.00px;font-size:8.2px;line-height:8.2px;color:#444;transform:scaleX(0.9845);">12:45 PM</span>
<span class="t" style="left:626.50px;top:269.00px;font-size:8.5px;line-height:8.5px;color:#444;">Completed</span>
<span class="t" style="left:210.00px;top:292.00px;font-size:8.2px;line-height:8.2px;color:#444;">03:05:45</span>
<span class="t" style="left:271.50px;top:292.00px;font-size:8.2px;line-height:8.2px;color:#444;">25 Oct, 2022</span>
<span class="t" style="left:344.50px;top:291.00px;font-size:8.3px;line-height:8.3px;color:#444;">34.56</span>
<span class="t" style="left:417.00px;top:292.00px;font-size:8.2px;line-height:8.2px;color:#444;">Family Plan</span>
<span class="t" style="left:490.50px;top:292.00px;font-size:8.2px;line-height:8.2px;color:#444;">25 Oct, 2022</span>
<span class="t" style="left:544.00px;top:292.00px;font-size:8.2px;line-height:8.2px;color:#444;transform:scaleX(0.9845);">12:45 PM</span>
<span class="t" style="left:626.50px;top:291.00px;font-size:8.5px;line-height:8.5px;color:#444;">Completed</span>
<span class="t" style="left:210.00px;top:314.00px;font-size:8.2px;line-height:8.2px;color:#444;">00:50:00</span>
<span class="t" style="left:271.50px;top:314.00px;font-size:8.2px;line-height:8.2px;color:#444;">25 Oct, 2022</span>
<span class="t" style="left:344.50px;top:313.00px;font-size:8.3px;line-height:8.3px;color:#444;">78.90</span>
<span class="t" style="left:417.00px;top:314.00px;font-size:8.2px;line-height:8.2px;color:#444;">Business Plan</span>
<span class="t" style="left:490.50px;top:314.00px;font-size:8.2px;line-height:8.2px;color:#444;">25 Oct, 2022</span>
<span class="t" style="left:544.00px;top:314.00px;font-size:8.2px;line-height:8.2px;color:#444;transform:scaleX(0.9845);">12:45 PM</span>
<span class="t" style="left:626.50px;top:313.00px;font-size:8.5px;line-height:8.5px;color:#444;">Completed</span>
<span class="t" style="left:210.00px;top:336.00px;font-size:8.2px;line-height:8.2px;color:#444;">01:20:10</span>
<span class="t" style="left:271.50px;top:336.00px;font-size:8.2px;line-height:8.2px;color:#444;">25 Oct, 2022</span>
<span class="t" style="left:344.50px;top:335.00px;font-size:8.3px;line-height:8.3px;color:#444;">11.22</span>
<span class="t" style="left:417.50px;top:336.00px;font-size:8.2px;line-height:8.2px;color:#444;">Student Plan</span>
<span class="t" style="left:490.50px;top:336.00px;font-size:8.2px;line-height:8.2px;color:#444;">25 Oct, 2022</span>
<span class="t" style="left:544.00px;top:336.00px;font-size:8.2px;line-height:8.2px;color:#444;transform:scaleX(0.9845);">12:45 PM</span>
<span class="t" style="left:626.50px;top:335.00px;font-size:8.5px;line-height:8.5px;color:#444;">Completed</span>
<span class="t" style="left:210.00px;top:359.00px;font-size:8.2px;line-height:8.2px;color:#444;">02:00:00</span>
<span class="t" style="left:271.50px;top:359.00px;font-size:8.2px;line-height:8.2px;color:#444;">25 Oct, 2022</span>
<span class="t" style="left:344.50px;top:358.00px;font-size:8.3px;line-height:8.3px;color:#444;">33.44</span>
<span class="t" style="left:417.50px;top:359.00px;font-size:8.2px;line-height:8.2px;color:#444;">Senior Plan</span>
<span class="t" style="left:490.50px;top:359.00px;font-size:8.2px;line-height:8.2px;color:#444;">27 Oct, 2022</span>
<span class="t" style="left:544.00px;top:359.00px;font-size:8.2px;line-height:8.2px;color:#444;transform:scaleX(0.9845);">12:45 PM</span>
<span class="t" style="left:626.50px;top:358.00px;font-size:8.5px;line-height:8.5px;color:#444;">Completed</span>
<span class="t" style="left:210.00px;top:381.00px;font-size:8.2px;line-height:8.2px;color:#444;">01:15:25</span>
<span class="t" style="left:271.50px;top:381.00px;font-size:8.2px;line-height:8.2px;color:#444;">25 Oct, 2022</span>
<span class="t" style="left:344.50px;top:380.00px;font-size:8.3px;line-height:8.3px;color:#444;">55.66</span>
<span class="t" style="left:417.00px;top:381.00px;font-size:8.2px;line-height:8.2px;color:#444;">Enterprise P...</span>
<span class="t" style="left:490.50px;top:381.00px;font-size:8.2px;line-height:8.2px;color:#444;">27Oct, 2022</span>
<span class="t" style="left:541.50px;top:381.00px;font-size:8.2px;line-height:8.2px;color:#444;">12:45 PM</span>
<span class="t" style="left:626.50px;top:380.00px;font-size:8.5px;line-height:8.5px;color:#444;">Completed</span>
</body></html>
